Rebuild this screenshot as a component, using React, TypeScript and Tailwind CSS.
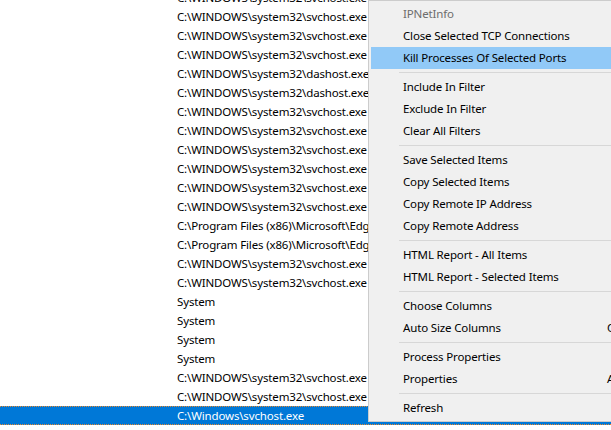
const rows = [
  "C:\\WINDOWS\\system32\\svchost.exe",
  "C:\\WINDOWS\\system32\\svchost.exe",
  "C:\\WINDOWS\\system32\\svchost.exe",
  "C:\\WINDOWS\\system32\\svchost.exe",
  "C:\\WINDOWS\\system32\\dashost.exe",
  "C:\\WINDOWS\\system32\\dashost.exe",
  "C:\\WINDOWS\\system32\\svchost.exe",
  "C:\\WINDOWS\\system32\\svchost.exe",
  "C:\\WINDOWS\\system32\\svchost.exe",
  "C:\\WINDOWS\\system32\\svchost.exe",
  "C:\\WINDOWS\\system32\\svchost.exe",
  "C:\\WINDOWS\\system32\\svchost.exe",
  "C:\\Program Files (x86)\\Microsoft\\Edge\\Application\\msedge.exe",
  "C:\\Program Files (x86)\\Microsoft\\Edge\\Application\\msedge.exe",
  "C:\\WINDOWS\\system32\\svchost.exe",
  "C:\\WINDOWS\\system32\\svchost.exe",
  "System",
  "System",
  "System",
  "System",
  "C:\\WINDOWS\\system32\\svchost.exe",
  "C:\\WINDOWS\\system32\\svchost.exe",
];

type Item = { label?: string; shortcut?: string; disabled?: boolean; active?: boolean; sep?: boolean };

const menu: Item[] = [
  { label: "IPNetInfo", disabled: true },
  { label: "Close Selected TCP Connections" },
  { label: "Kill Processes Of Selected Ports", active: true },
  { sep: true },
  { label: "Include In Filter" },
  { label: "Exclude In Filter" },
  { label: "Clear All Filters" },
  { sep: true },
  { label: "Save Selected Items" },
  { label: "Copy Selected Items" },
  { label: "Copy Remote IP Address" },
  { label: "Copy Remote Address" },
  { sep: true },
  { label: "HTML Report - All Items" },
  { label: "HTML Report - Selected Items" },
  { sep: true },
  { label: "Choose Columns" },
  { label: "Auto Size Columns", shortcut: "Ctrl+Plus" },
  { sep: true },
  { label: "Process Properties" },
  { label: "Properties", shortcut: "Alt+Enter" },
  { sep: true },
  { label: "Refresh" },
];

export default function App() {
  return (
    <div
      className="relative w-[611px] h-[430px] overflow-hidden bg-white text-[11.5px] tracking-[-0.15px] text-black"
      style={{ fontFamily: '"Noto Sans", "Open Sans", sans-serif' }}
    >
      {/* list rows */}
      <div className="-mt-[12px] flex flex-col">
        {rows.map((r, i) => (
          <div key={i} className="h-[19px] flex items-center pl-[177px]">
            <span className="w-[194px] overflow-hidden whitespace-nowrap">{r}</span>
          </div>
        ))}
        <div className="h-[19px] flex items-center pl-[177px] bg-[#0078d7] text-white border-y border-dotted border-[#e8892f]">
          <span className="w-[194px] overflow-hidden whitespace-nowrap">C:\Windows\svchost.exe</span>
        </div>
      </div>

      {/* context menu */}
      <div className="absolute left-[368px] top-0 w-[243px] overflow-hidden bg-[#f0f0f0] border-y border-l border-[#cccccc] py-[2px] pl-[2px]">
        {menu.map((m, i) =>
          m.sep ? (
            <div key={i} className="h-[7px] flex items-center pl-[28px]">
              <div className="h-px w-full bg-[#d7d7d7]" />
            </div>
          ) : (
            <div
              key={i}
              className={`h-[22px] flex items-center pl-[32px] whitespace-nowrap ${
                m.active ? "bg-[#91c9f7]" : ""
              } ${m.disabled ? "text-[#6d6d6d]" : "text-black"}`}
            >
              <span className="w-[204px] shrink-0">{m.label}</span>
              {m.shortcut && <span className="shrink-0">{m.shortcut}</span>}
            </div>
          )
        )}
      </div>
    </div>
  );
}
